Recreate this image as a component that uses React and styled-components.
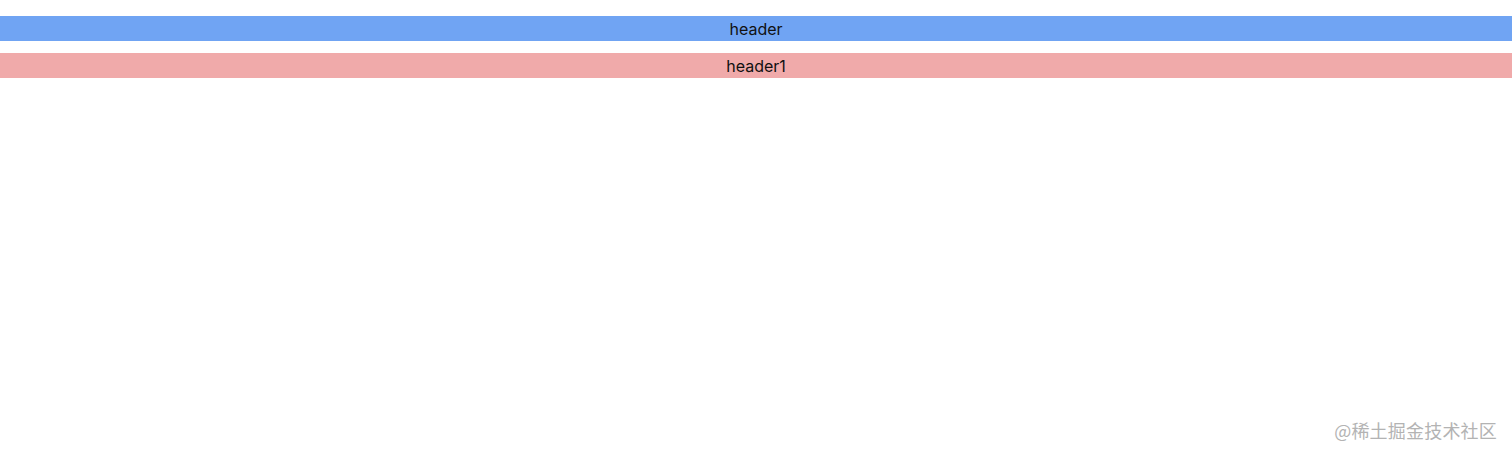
import React from "react";
import styled, { createGlobalStyle } from "styled-components";

const GlobalStyle = createGlobalStyle`
  html, body {
    margin: 0;
    padding: 0;
    background: #ffffff;
    font-family: Inter, "Noto Sans", "Liberation Sans", sans-serif;
  }
`;

const Page = styled.div`
  position: relative;
  width: 100vw;
  height: 100vh;
  padding-top: 16px;
  box-sizing: border-box;
  display: flex;
  flex-direction: column;
  gap: 12px;
`;

const Bar = styled.div`
  height: 25px;
  line-height: 26px;
  text-align: center;
  font-size: 16px;
  color: #111;
  background-color: ${(props) => props.bg};
`;

const Watermark = styled.div`
  position: absolute;
  right: 15px;
  bottom: 15px;
  font-size: 18px;
  color: #b3b3b3;
  letter-spacing: 0.2px;
  font-family: "Noto Sans CJK SC", "Noto Sans", sans-serif;
`;

export default function App() {
  return (
    <>
      <GlobalStyle />
      <Page>
        <Bar bg="#70a4f3">header</Bar>
        <Bar bg="#f0aaaa">header1</Bar>
        <Watermark>@稀土掘金技术社区</Watermark>
      </Page>
    </>
  );
}
